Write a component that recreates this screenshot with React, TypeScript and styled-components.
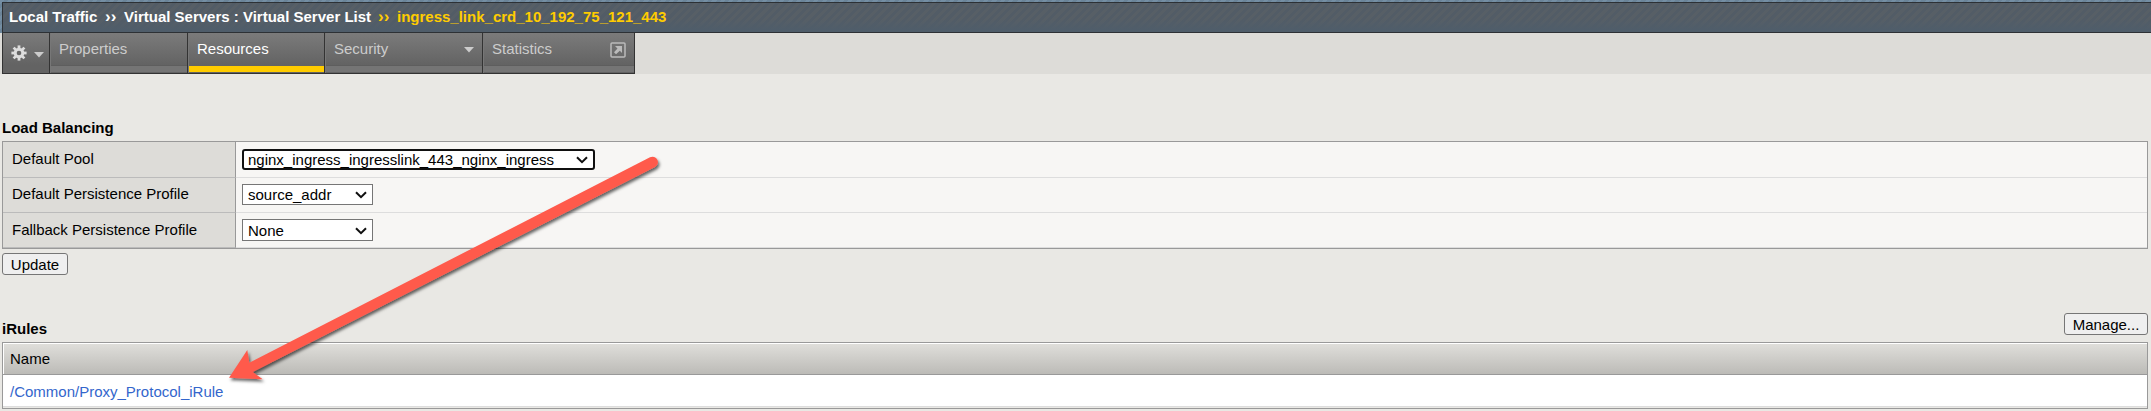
import React from "react";
import styled, { createGlobalStyle, css } from "styled-components";

const GlobalStyle = createGlobalStyle`
  * { box-sizing: border-box; }
  body {
    margin: 0;
    background: #e9e8e4;
    font-family: "Liberation Sans", Arial, sans-serif;
    font-size: 15px;
    line-height: 18px;
    color: #000;
    overflow: hidden;
  }
`;

const Page = styled.div`
  position: relative;
  height: 411px;
  overflow: hidden;
`;

const Masthead = styled.header`
  height: 33px;
  padding: 2px 0 0 2px;
  background: repeating-linear-gradient(135deg, #748ea3 0 3px, #6b8498 3px 6px);
`;

const Breadcrumb = styled.div`
  display: flex;
  height: 31px;
  padding: 5px 0 0 6px;
  border: 1px solid #2d3135;
  border-right: 0;
  background: linear-gradient(#525b6400 55%, #4f5d6a 92%),
    repeating-linear-gradient(135deg, #525c66 0 3px, #575f66 3px 6px);
  color: #fff;
  font-weight: bold;
  white-space: pre;
`;

const Crumb = styled.span<{ $current?: boolean; $width?: number }>`
  width: ${(p) => (p.$width ? `${p.$width}px` : "auto")};
  color: ${(p) => (p.$current ? "#fc0" : "#fff")};
`;

const Separator = styled(Crumb)`
  width: 19px;
  margin-left: -1px;
  font-size: 17px;
`;

const TabBar = styled.nav`
  display: flex;
  height: 41px;
  padding-left: 2px;
  background: #dddcd8;
`;

const Tab = styled.div<{ $width: number; $active?: boolean; $plain?: boolean }>`
  position: relative;
  display: flex;
  justify-content: space-between;
  width: ${(p) => p.$width}px;
  height: 41px;
  padding: 7px 8px 0 9px;
  border-right: 1px solid #333;
  border-bottom: 1px solid #333;
  background: linear-gradient(#7b7b7b, #636363 32px);
  color: ${(p) => (p.$active ? "#fff" : "#ccc")};
  box-shadow: inset 1px 0 #777;
  ${(p) => p.$plain && css`
    justify-content: flex-start;
    gap: 7px;
    padding: 12px 0 0 8px;
    border-left: 1px solid #333;
    box-shadow: none;
  `}
`;

const TabStrip = styled.span<{ $active?: boolean }>`
  position: absolute;
  left: 1px;
  right: 0;
  bottom: 1px;
  height: ${(p) => (p.$active ? 6 : 7)}px;
  background: ${(p) => (p.$active ? "#fc0" : "#757575")};
  border-top: ${(p) => (p.$active ? 0 : "1px solid #5e5e5e")};
`;

const Content = styled.main`
  padding: 0 3px 0 2px;
`;

const Heading = styled.h2`
  margin: 0;
  font-size: 15px;
  line-height: 18px;
`;

const LoadHeading = styled(Heading)`
  padding-top: 45px;
  height: 67px;
`;

const Settings = styled.div`
  height: 108px;
  border: 1px solid #999;
  background: #f7f6f4;
`;

const SettingLabel = styled.label`
  width: 233px;
  padding: 8px 0 0 9px;
  border-right: 1px solid #999;
  border-bottom: 1px solid #bbb;
  background: #dddcd8;
`;

const SettingRow = styled.div`
  display: flex;
  height: 35px;
  &:first-child { height: 36px; }
  &:nth-child(2) ${SettingLabel} { padding-top: 7px; }
`;

const SettingValue = styled.div`
  flex: 1;
  padding: 6px 0 0 6px;
  border-bottom: 1px solid #ddd;
`;

const Select = styled.div<{ $width: number; $height: number; $focused?: boolean }>`
  display: flex;
  align-items: center;
  justify-content: space-between;
  width: ${(p) => p.$width}px;
  height: ${(p) => p.$height}px;
  margin-top: ${(p) => (p.$focused ? 1 : 0)}px;
  padding: ${(p) => (p.$focused ? "1px 5px 0 4px" : "1px 5px 0 5px")};
  border: ${(p) => (p.$focused ? "2px solid #101010" : "1px solid #767676")};
  border-radius: ${(p) => (p.$focused ? 3 : 0)}px;
  background: #fff;
`;

const Button = styled.button<{ $width: number }>`
  width: ${(p) => p.$width}px;
  height: 22px;
  padding: 1px 0 0;
  border: 1px solid #767676;
  border-radius: 3px;
  background: #efefef;
  color: #000;
  font: 15px/18px "Liberation Sans", Arial, sans-serif;
`;

const Actions = styled.div`
  padding-top: 4px;
  height: 64px;
`;

const RulesHeader = styled.div`
  display: flex;
  justify-content: space-between;
  height: 29px;
  ${Heading} { padding-top: 7px; }
`;

const RulesTable = styled.div`
  border: 1px solid #999;
  height: 67px;
  background: #e9e8e4;
`;

const NameHeader = styled.div`
  height: 32px;
  padding: 6px 0 0 7px;
  border-bottom: 1px solid #999;
  border-top: 1px solid #fff;
  box-shadow: inset 1px 0 #fff;
  background: linear-gradient(#dfdeda, #bcbbb7);
`;

const RuleRow = styled.div`
  height: 32px;
  padding: 8px 0 0 7px;
  border-bottom: 1px solid #ddd;
  background: #fff;
`;

const RuleLink = styled.a`
  color: #36c;
`;

const Arrow = styled.svg`
  position: absolute;
  left: 0;
  top: 0;
  pointer-events: none;
`;

const Caret = styled.svg`
  flex: none;
  margin-top: 7px;
`;

const ExternalIcon = styled.svg`
  margin-top: 2px;
`;

const Chevron = () => (
  <svg width="12" height="8" viewBox="0 0 12 8" fill="none">
    <path d="M1 1.2 6 6.2 11 1.2" stroke="#101010" strokeWidth="2" />
  </svg>
);

const Triangle = () => (
  <Caret width="10" height="6" viewBox="0 0 10 6">
    <path d="M0 0H10L5 5.6Z" fill="#ccc" />
  </Caret>
);

const Gear = () => (
  <svg width="16" height="16" viewBox="-8 -8 16 16">
    {[0, 45, 90, 135].map((a) => (
      <rect key={a} x="-1.4" y="-7.6" width="2.8" height="15.2" fill="#ddd" transform={`rotate(${a})`} />
    ))}
    <circle r="5.3" fill="#ddd" />
    <circle r="2.3" fill="#666" />
  </svg>
);

const External = () => (
  <ExternalIcon width="16" height="16" viewBox="0 0 16 16" fill="none">
    <rect x="1" y="1" width="14" height="14" rx="1" stroke="#bbb" strokeWidth="1.5" />
    <path d="M5 4H12V11L9.8 8.8 6 12.3 4 10.2 7.5 6.5Z" fill="#bbb" />
  </ExternalIcon>
);

const rows = [
  { label: "Default Pool", value: "nginx_ingress_ingresslink_443_nginx_ingress", width: 353, height: 21, focused: true },
  { label: "Default Persistence Profile", value: "source_addr", width: 131, height: 21 },
  { label: "Fallback Persistence Profile", value: "None", width: 131, height: 22 },
];

export default function App() {
  return (
    <Page>
      <GlobalStyle />
      <Masthead>
        <Breadcrumb>
          <Crumb $width={97}>Local Traffic</Crumb>
          <Separator>››</Separator>
          <Crumb $width={255}>Virtual Servers : Virtual Server List</Crumb>
          <Separator $current>››</Separator>
          <Crumb $current>ingress_link_crd_10_192_75_121_443</Crumb>
        </Breadcrumb>
      </Masthead>
      <TabBar>
        <Tab $width={48} $plain><Gear /><Triangle /></Tab>
        <Tab $width={138}>Properties<TabStrip /></Tab>
        <Tab $width={137} $active>Resources<TabStrip $active /></Tab>
        <Tab $width={158}>Security<Triangle /><TabStrip /></Tab>
        <Tab $width={152}>Statistics<External /><TabStrip /></Tab>
      </TabBar>
      <Content>
        <LoadHeading>Load Balancing</LoadHeading>
        <Settings>
          {rows.map((r) => (
            <SettingRow key={r.label}>
              <SettingLabel>{r.label}</SettingLabel>
              <SettingValue>
                <Select $width={r.width} $height={r.height} $focused={r.focused}>
                  {r.value}<Chevron />
                </Select>
              </SettingValue>
            </SettingRow>
          ))}
        </Settings>
        <Actions><Button $width={66}>Update</Button></Actions>
        <RulesHeader>
          <Heading>iRules</Heading>
          <Button $width={84}>Manage...</Button>
        </RulesHeader>
        <RulesTable>
          <NameHeader>Name</NameHeader>
          <RuleRow><RuleLink>/Common/Proxy_Protocol_iRule</RuleLink></RuleRow>
        </RulesTable>
      </Content>
      <Arrow width="700" height="411" viewBox="0 0 700 411">
        <defs>
          <filter id="shadow" x="-5%" y="-5%" width="110%" height="115%">
            <feDropShadow dx="1.5" dy="2.5" stdDeviation="1.8" floodColor="#000" floodOpacity="0.6" />
          </filter>
        </defs>
        <path
          d="M229 377.7 247.3 350 249.3 362.7 650 157.3A5.2 5.2 0 0 1 655 167L252.7 371.9 262.7 379.3Z"
          fill="#ff5a4c"
          filter="url(#shadow)"
        />
      </Arrow>
    </Page>
  );
}
